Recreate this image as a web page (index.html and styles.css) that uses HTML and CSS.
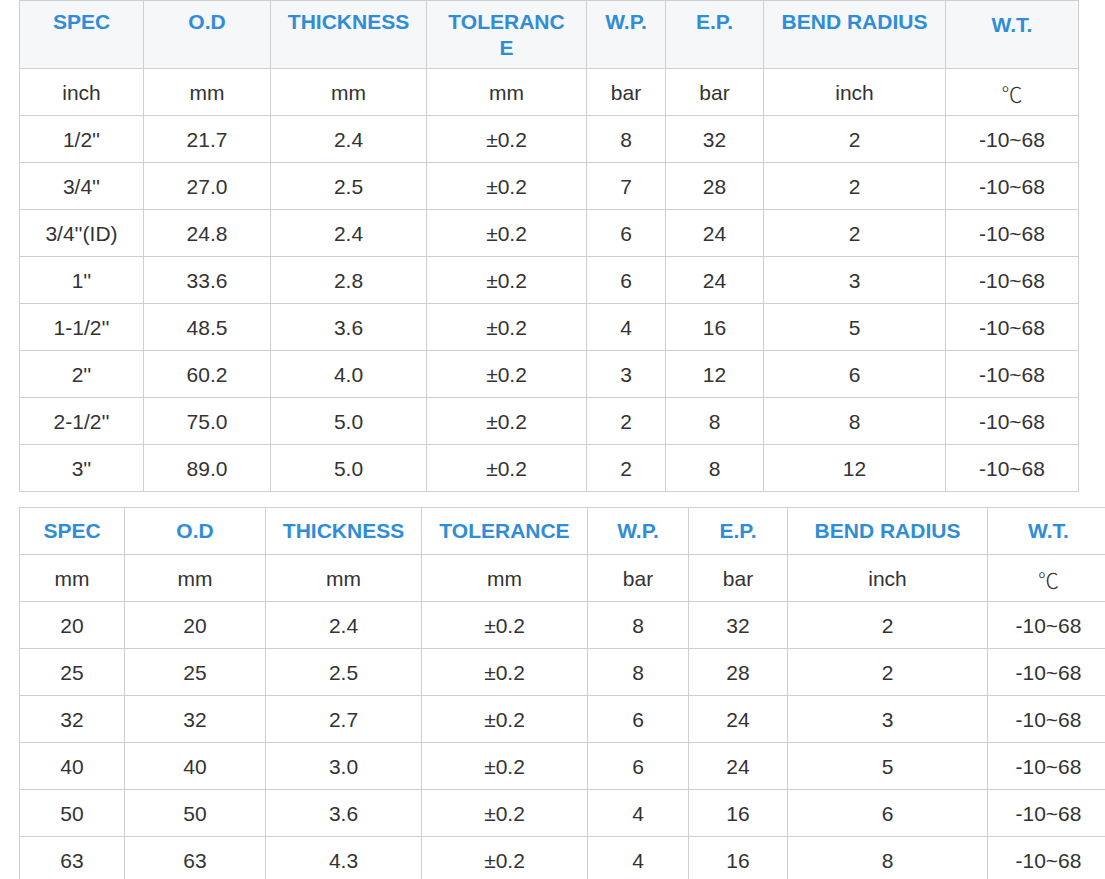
FILE: index.html
```html
<!DOCTYPE html>
<html>
<head>
<meta charset="utf-8">
<link rel="stylesheet" href="styles.css">
</head>
<body>
<div class="page">
  <table class="spec spec-inch">
    <colgroup>
      <col class="c1"><col class="c2"><col class="c3"><col class="c4"><col class="c5"><col class="c6"><col class="c7"><col class="c8">
    </colgroup>
    <thead>
      <tr><th>SPEC</th><th>O.D</th><th>THICKNESS</th><th>TOLERANC<br>E</th><th>W.P.</th><th>E.P.</th><th>BEND RADIUS</th><th class="wt">W.T.</th></tr>
    </thead>
    <tbody>
      <tr><td>inch</td><td>mm</td><td>mm</td><td>mm</td><td>bar</td><td>bar</td><td>inch</td><td class="deg">℃</td></tr>
      <tr><td>1/2''</td><td>21.7</td><td>2.4</td><td>±0.2</td><td>8</td><td>32</td><td>2</td><td>-10~68</td></tr>
      <tr><td>3/4''</td><td>27.0</td><td>2.5</td><td>±0.2</td><td>7</td><td>28</td><td>2</td><td>-10~68</td></tr>
      <tr><td>3/4''(ID)</td><td>24.8</td><td>2.4</td><td>±0.2</td><td>6</td><td>24</td><td>2</td><td>-10~68</td></tr>
      <tr><td>1''</td><td>33.6</td><td>2.8</td><td>±0.2</td><td>6</td><td>24</td><td>3</td><td>-10~68</td></tr>
      <tr><td>1-1/2''</td><td>48.5</td><td>3.6</td><td>±0.2</td><td>4</td><td>16</td><td>5</td><td>-10~68</td></tr>
      <tr><td>2''</td><td>60.2</td><td>4.0</td><td>±0.2</td><td>3</td><td>12</td><td>6</td><td>-10~68</td></tr>
      <tr><td>2-1/2''</td><td>75.0</td><td>5.0</td><td>±0.2</td><td>2</td><td>8</td><td>8</td><td>-10~68</td></tr>
      <tr><td>3''</td><td>89.0</td><td>5.0</td><td>±0.2</td><td>2</td><td>8</td><td>12</td><td>-10~68</td></tr>
    </tbody>
  </table>

  <table class="spec spec-mm">
    <colgroup>
      <col class="c1"><col class="c2"><col class="c3"><col class="c4"><col class="c5"><col class="c6"><col class="c7"><col class="c8">
    </colgroup>
    <thead>
      <tr><th>SPEC</th><th>O.D</th><th>THICKNESS</th><th>TOLERANCE</th><th>W.P.</th><th>E.P.</th><th>BEND RADIUS</th><th>W.T.</th></tr>
    </thead>
    <tbody>
      <tr><td>mm</td><td>mm</td><td>mm</td><td>mm</td><td>bar</td><td>bar</td><td>inch</td><td class="deg">℃</td></tr>
      <tr><td>20</td><td>20</td><td>2.4</td><td>±0.2</td><td>8</td><td>32</td><td>2</td><td>-10~68</td></tr>
      <tr><td>25</td><td>25</td><td>2.5</td><td>±0.2</td><td>8</td><td>28</td><td>2</td><td>-10~68</td></tr>
      <tr><td>32</td><td>32</td><td>2.7</td><td>±0.2</td><td>6</td><td>24</td><td>3</td><td>-10~68</td></tr>
      <tr><td>40</td><td>40</td><td>3.0</td><td>±0.2</td><td>6</td><td>24</td><td>5</td><td>-10~68</td></tr>
      <tr><td>50</td><td>50</td><td>3.6</td><td>±0.2</td><td>4</td><td>16</td><td>6</td><td>-10~68</td></tr>
      <tr><td>63</td><td>63</td><td>4.3</td><td>±0.2</td><td>4</td><td>16</td><td>8</td><td>-10~68</td></tr>
    </tbody>
  </table>
</div>
</body>
</html>
```

FILE: styles.css
```css
html, body {
  margin: 0;
  padding: 0;
  background: #ffffff;
  overflow: hidden;
}

.page {
  padding: 0 0 0 19px;
  overflow: hidden;
  font-family: "Liberation Sans", Arial, "Noto Sans CJK SC", sans-serif;
  font-size: 21px;
  color: #333333;
}

.spec {
  border-collapse: collapse;
  table-layout: fixed;
  text-align: center;
}

.spec th,
.spec td {
  border: 1px solid #cfcfcf;
  line-height: 26px;
  padding: 10px 2px;
  vertical-align: middle;
}

.spec td {
  padding-top: 11px;
  padding-bottom: 9px;
}

.spec th {
  color: #2f8dd8;
  font-weight: bold;
}

.deg {
  font-family: "Noto Sans CJK SC", sans-serif;
  font-weight: 300;
}

/* first table: inch sizes */
.spec-inch {
  width: 1060px;
}
.spec-inch thead th {
  background: #f5f7f9;
  vertical-align: top;
  padding: 8px 2px 7px;
}
.spec-inch thead th.wt {
  padding-top: 11px;
  padding-bottom: 4px;
}
.spec-inch .c1 { width: 124px; }
.spec-inch .c2 { width: 127px; }
.spec-inch .c3 { width: 156px; }
.spec-inch .c4 { width: 160px; }
.spec-inch .c5 { width: 79px; }
.spec-inch .c6 { width: 98px; }
.spec-inch .c7 { width: 182px; }
.spec-inch .c8 { width: 133px; }

/* second table: metric sizes */
.spec-mm {
  width: 1090px;
  margin-top: 15px;
}
.spec-mm .c1 { width: 105px; }
.spec-mm .c2 { width: 141px; }
.spec-mm .c3 { width: 156px; }
.spec-mm .c4 { width: 166px; }
.spec-mm .c5 { width: 101px; }
.spec-mm .c6 { width: 99px; }
.spec-mm .c7 { width: 200px; }
.spec-mm .c8 { width: 122px; }
```
